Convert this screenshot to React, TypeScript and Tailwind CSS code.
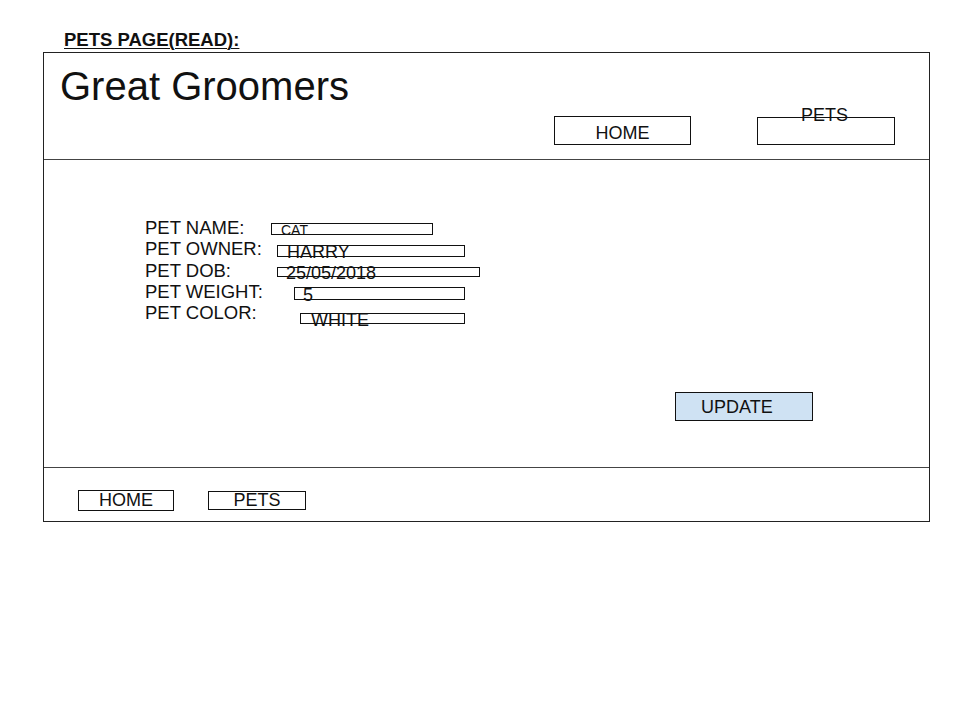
import React from 'react'

const rows = [
  { label: 'PET NAME:', value: 'CAT', lw: 'w-[126px]', box: 'mt-[6px] w-[162px] h-[12px]', text: 'text-[14px] leading-[14px] -mt-[1px] pl-[9px]' },
  { label: 'PET OWNER:', value: 'HARRY', lw: 'w-[132px]', box: 'mt-[7px] w-[188px] h-[12px]', text: 'text-[18px] leading-[18px] -mt-[3px] pl-[9px]' },
  { label: 'PET DOB:', value: '25/05/2018', lw: 'w-[132px]', box: 'mt-[7px] w-[203px] h-[10px]', text: 'text-[18px] leading-[18px] -mt-[4px] pl-[8px]' },
  { label: 'PET WEIGHT:', value: '5', lw: 'w-[149px]', box: 'mt-[6px] w-[171px] h-[13px]', text: 'text-[18px] leading-[18px] -mt-[2px] pl-[8px]' },
  { label: 'PET COLOR:', value: 'WHITE', lw: 'w-[155px]', box: 'mt-[11px] w-[165px] h-[11px]', text: 'text-[18px] leading-[18px] -mt-[3px] pl-[10px]' },
]

function FieldRow({ row }: { row: (typeof rows)[number] }) {
  return (
    <div className="flex items-start h-[21.25px]">
      <span className={`${row.lw} shrink-0 text-[18.5px] leading-[21.25px]`}>{row.label}</span>
      <div className={`${row.box} shrink-0 border border-[#111] overflow-visible`}>
        <div className={`${row.text} whitespace-nowrap`}>{row.value}</div>
      </div>
    </div>
  )
}

export default function App() {
  return (
    <div className="min-h-[720px] bg-white text-[#111] font-['Liberation_Sans',Arial,sans-serif] pt-[31px]">
      <div className="ml-[64px] text-[18.5px] leading-[18px] font-bold underline decoration-1 underline-offset-[2px]">
        PETS PAGE(READ):
      </div>

      <div className="ml-[43px] mt-[3px] w-[887px] h-[470px] border border-[#222] flex flex-col">
        <header className="h-[107px] shrink-0 border-b border-[#444] pt-[13px]">
          <h1 className="pl-[16px] text-[40px] leading-[40px]">Great Groomers</h1>
          <div className="mt-[10px] flex justify-end items-start gap-[66px] pr-[34px]">
            <div className="w-[137px] h-[29px] border border-[#111] pt-[7px] text-center text-[18px] leading-[18px]">HOME</div>
            <div className="mt-[1px] w-[138px] h-[28px] border border-[#111] text-center text-[18px] leading-[18px]">
              <div className="-mt-[12px] -ml-[3px]">PETS</div>
            </div>
          </div>
        </header>

        <main className="h-[308px] shrink-0 border-b border-[#444] pt-[57px]">
          <div className="pl-[101px] flex flex-col">
            {rows.map((r) => (
              <FieldRow key={r.label} row={r} />
            ))}
          </div>
          <div className="mt-[69px] flex justify-end pr-[116px]">
            <div className="w-[138px] h-[29px] border border-[#111] bg-[#cfe2f3] pl-[25px] pt-[5px] text-[18px] leading-[18px]">UPDATE</div>
          </div>
        </main>

        <footer className="flex items-start gap-[34px] pl-[34px] pt-[22px]">
          <div className="w-[96px] h-[21px] border border-[#111] text-center text-[18px] leading-[18px]">HOME</div>
          <div className="mt-[1px] w-[98px] h-[19px] border border-[#111] text-center text-[18px] leading-[18px]">
            <div className="-mt-[1px]">PETS</div>
          </div>
        </footer>
      </div>
    </div>
  )
}
